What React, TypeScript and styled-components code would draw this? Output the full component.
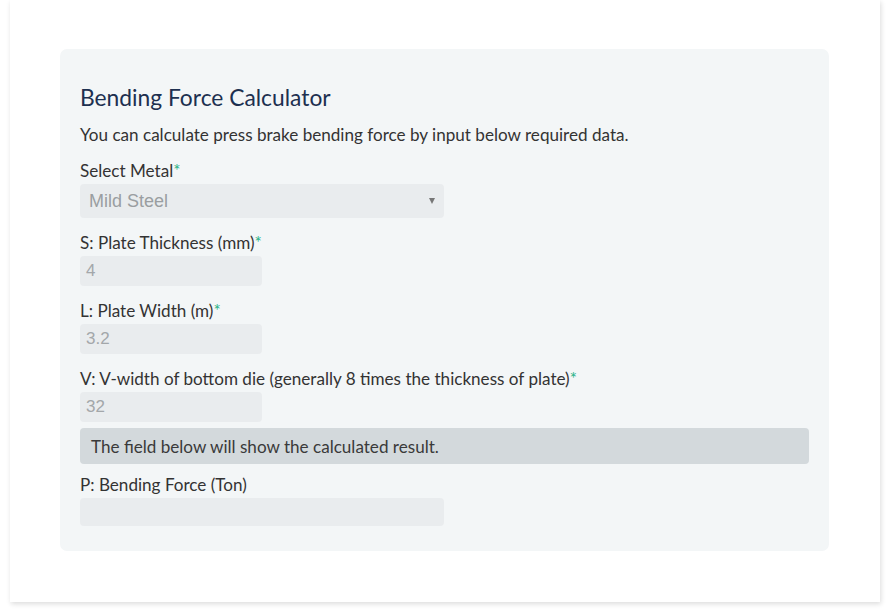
import React from "react";
import styled, { createGlobalStyle } from "styled-components";

const Global = createGlobalStyle`
  html, body { margin: 0; padding: 0; background: #ffffff; }
  body { font-family: Lato, "Open Sans", sans-serif; color: #333; }
  * { box-sizing: border-box; }
`;

const Page = styled.div`
  width: 889px;
  height: 611px;
  padding-left: 10px;
  overflow: hidden;
`;

const Card = styled.div`
  width: 870px;
  height: 602px;
  background: #fff;
  box-shadow: 1px 2px 5px rgba(0, 0, 0, 0.14);
  padding: 49px 51px 51px 50px;
`;

const Panel = styled.section`
  height: 502px;
  background: #f3f6f7;
  border-radius: 7px;
  padding: 34px 20px 25px 20px;
  display: flex;
  flex-direction: column;
`;

const Title = styled.h2`
  margin: 0;
  font-size: 22.8px;
  font-weight: 400;
  line-height: 28px;
  color: #1d3050;
`;

const Intro = styled.p`
  margin: 12px 0 12px;
  font-size: 17.1px;
  line-height: 24px;
  color: #333;
`;

const Label = styled.label<{ $gap?: number }>`
  display: block;
  font-size: 17.1px;
  line-height: 24px;
  color: #333;
  margin-top: ${(p) => p.$gap ?? 0}px;
  margin-bottom: 1px;
`;

const Star = styled.span`
  color: #2bb389;
`;

const Field = styled.div<{ $w: number; $h: number }>`
  width: ${(p) => p.$w}px;
  height: ${(p) => p.$h}px;
  background: #e9ecee;
  border-radius: 4px;
  display: flex;
  align-items: center;
  padding: 0 9px 0 6px;
  font-family: "Liberation Sans", Arial, sans-serif;
  font-size: 17px;
  color: #a3a7aa;
`;

const SelectText = styled.span`
  padding-left: 3px;
  font-size: 18px;
  color: #9a9ea1;
`;

const Caret = styled.span`
  margin-left: auto;
  width: 0;
  height: 0;
  border-left: 3px solid transparent;
  border-right: 3px solid transparent;
  border-top: 6px solid #777;
`;

const Info = styled.div`
  margin-top: 6px;
  height: 36px;
  background: #d3d9dc;
  border-radius: 4px;
  display: flex;
  align-items: center;
  padding-left: 11px;
  font-size: 17.1px;
  color: #3a3a3a;
`;

export default function App() {
  return (
    <>
      <Global />
      <Page>
        <Card>
          <Panel>
            <Title>Bending Force Calculator</Title>
            <Intro>You can calculate press brake bending force by input below required data.</Intro>
            <Label>
              Select Metal<Star>*</Star>
            </Label>
            <Field $w={364} $h={34}>
              <SelectText>Mild Steel</SelectText>
              <Caret />
            </Field>
            <Label $gap={13}>
              S: Plate Thickness (mm)<Star>*</Star>
            </Label>
            <Field $w={182} $h={30}>4</Field>
            <Label $gap={13}>
              L: Plate Width (m)<Star>*</Star>
            </Label>
            <Field $w={182} $h={30}>3.2</Field>
            <Label $gap={13}>
              V: V-width of bottom die (generally 8 times the thickness of plate)<Star>*</Star>
            </Label>
            <Field $w={182} $h={30}>32</Field>
            <Info>The field below will show the calculated result.</Info>
            <Label $gap={9}>P: Bending Force (Ton)</Label>
            <Field $w={364} $h={28} />
          </Panel>
        </Card>
      </Page>
    </>
  );
}
